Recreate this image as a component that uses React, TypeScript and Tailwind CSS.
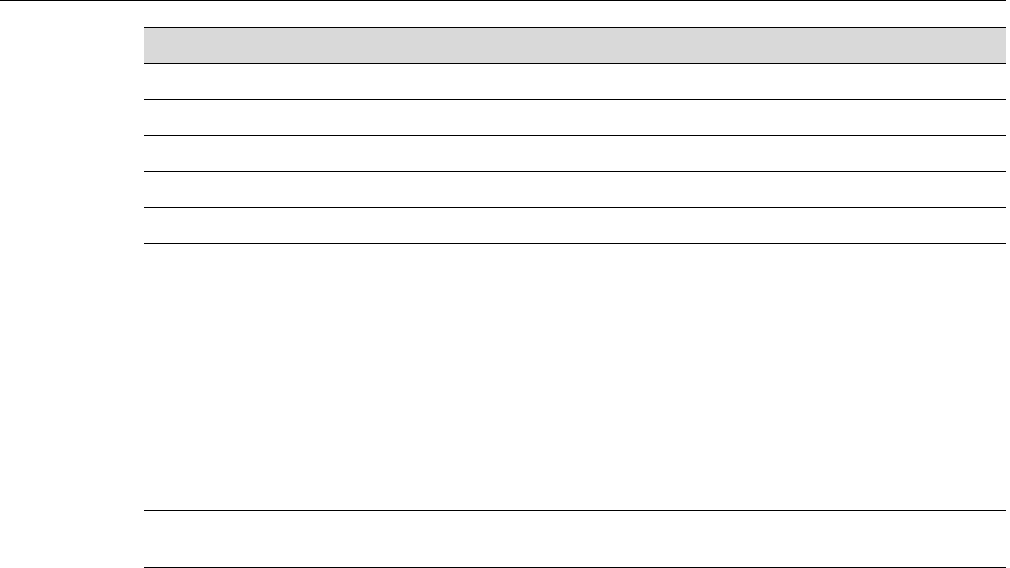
export default function App() {
  const rows = [0, 1, 2, 3, 4];
  return (
    <div className="w-[1010px] h-[568px] bg-white overflow-hidden font-['Liberation_Sans',sans-serif]">
      <div className="w-[1006px] border-t border-black">
        <div className="ml-[144px] mt-[26px] w-[862px]">
          <div className="h-[37px] border-t border-b border-black bg-[#d9d9d9]" />
          {rows.map((r) => (
            <div key={r} className="h-[36px] border-b border-black" />
          ))}
          <div className="h-[267px] border-b border-black" />
          <div className="h-[57px] border-b border-black" />
        </div>
      </div>
    </div>
  );
}
